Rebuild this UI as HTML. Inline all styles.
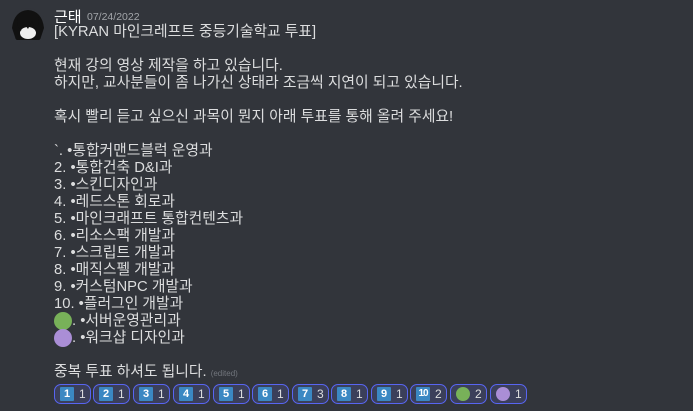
<!DOCTYPE html>
<html><head><meta charset="utf-8"><style>
body{margin:0;width:693px;height:411px;background:#32353b;overflow:hidden;font-family:"Liberation Sans","Noto Sans CJK KR",sans-serif;color:#dcddde}
.av{position:absolute;left:10px;top:8px;width:36px;height:36px;border-radius:50%;background:#32353b;overflow:hidden}
.name{position:absolute;left:54px;top:6px;font-size:15px;color:#fff}
.date{position:absolute;left:87px;top:11px;font-size:10.5px;color:#a3a6aa}
.msg{position:absolute;left:54px;top:24px;font-size:14.8px;line-height:17px;white-space:pre}
.c{display:inline-block;width:18px;height:18px;border-radius:50%;vertical-align:-4px;margin:-1px 0}
.ed{font-size:8px;color:#72767d}
.r{position:absolute;top:384px;width:35px;height:18px;border:1px solid #5865f2;border-radius:7px;background:#3b3f5a;font-size:12px;color:#dcddde}
.k{position:absolute;left:5px;top:2px;width:14px;height:14px;background:#3b88c3;color:#fff;font-size:11px;font-weight:bold;text-align:center;line-height:14px;border-radius:1px}
.n{position:absolute;left:24px;top:3px;line-height:12px}
.d{position:absolute;left:5px;top:2px;width:14px;height:14px;border-radius:50%}
</style></head><body>
<div class="av"><svg width="36" height="36"><path d="M2 20 Q4 3 18 2 Q32 3 34 20 L30 32 L6 32Z" fill="#111"/><ellipse cx="18" cy="25" rx="8" ry="6" fill="#eee"/><path d="M7 17 L11 23 L13 14 L18 21 L22 13 L25 22 L29 15 L28 9 L8 9Z" fill="#111"/></svg></div>
<div class="name">근태</div><div class="date">07/24/2022</div>
<div class="msg">[KYRAN 마인크레프트 중등기술학교 투표]

현재 강의 영상 제작을 하고 있습니다.
하지만, 교사분들이 좀 나가신 상태라 조금씩 지연이 되고 있습니다.

혹시 빨리 듣고 싶으신 과목이 뭔지 아래 투표를 통해 올려 주세요!

`. •통합커맨드블럭 운영과
2. •통합건축 D&amp;I과
3. •스킨디자인과
4. •레드스톤 회로과
5. •마인크래프트 통합컨텐츠과
6. •리소스팩 개발과
7. •스크립트 개발과
8. •매직스펠 개발과
9. •커스텀NPC 개발과
10. •플러그인 개발과
<span class="c" style="background:#78b159"></span>. •서버운영관리과
<span class="c" style="background:#aa8ed6"></span>. •워크샵 디자인과

중복 투표 하셔도 됩니다. <span class="ed">(edited)</span></div>
<div class="r" style="left:54px"><span class="k">1</span><span class="n">1</span></div>
<div class="r" style="left:93px"><span class="k">2</span><span class="n">1</span></div>
<div class="r" style="left:133px"><span class="k">3</span><span class="n">1</span></div>
<div class="r" style="left:173px"><span class="k">4</span><span class="n">1</span></div>
<div class="r" style="left:213px"><span class="k">5</span><span class="n">1</span></div>
<div class="r" style="left:252px"><span class="k">6</span><span class="n">1</span></div>
<div class="r" style="left:292px"><span class="k">7</span><span class="n">3</span></div>
<div class="r" style="left:331px"><span class="k">8</span><span class="n">1</span></div>
<div class="r" style="left:371px"><span class="k">9</span><span class="n">1</span></div>
<div class="r" style="left:410px"><span class="k" style="font-size:10px;letter-spacing:-1px">10</span><span class="n">2</span></div>
<div class="r" style="left:450px"><span class="d" style="background:#78b159"></span><span class="n">2</span></div>
<div class="r" style="left:490px"><span class="d" style="background:#aa8ed6"></span><span class="n">1</span></div>
</body></html>
